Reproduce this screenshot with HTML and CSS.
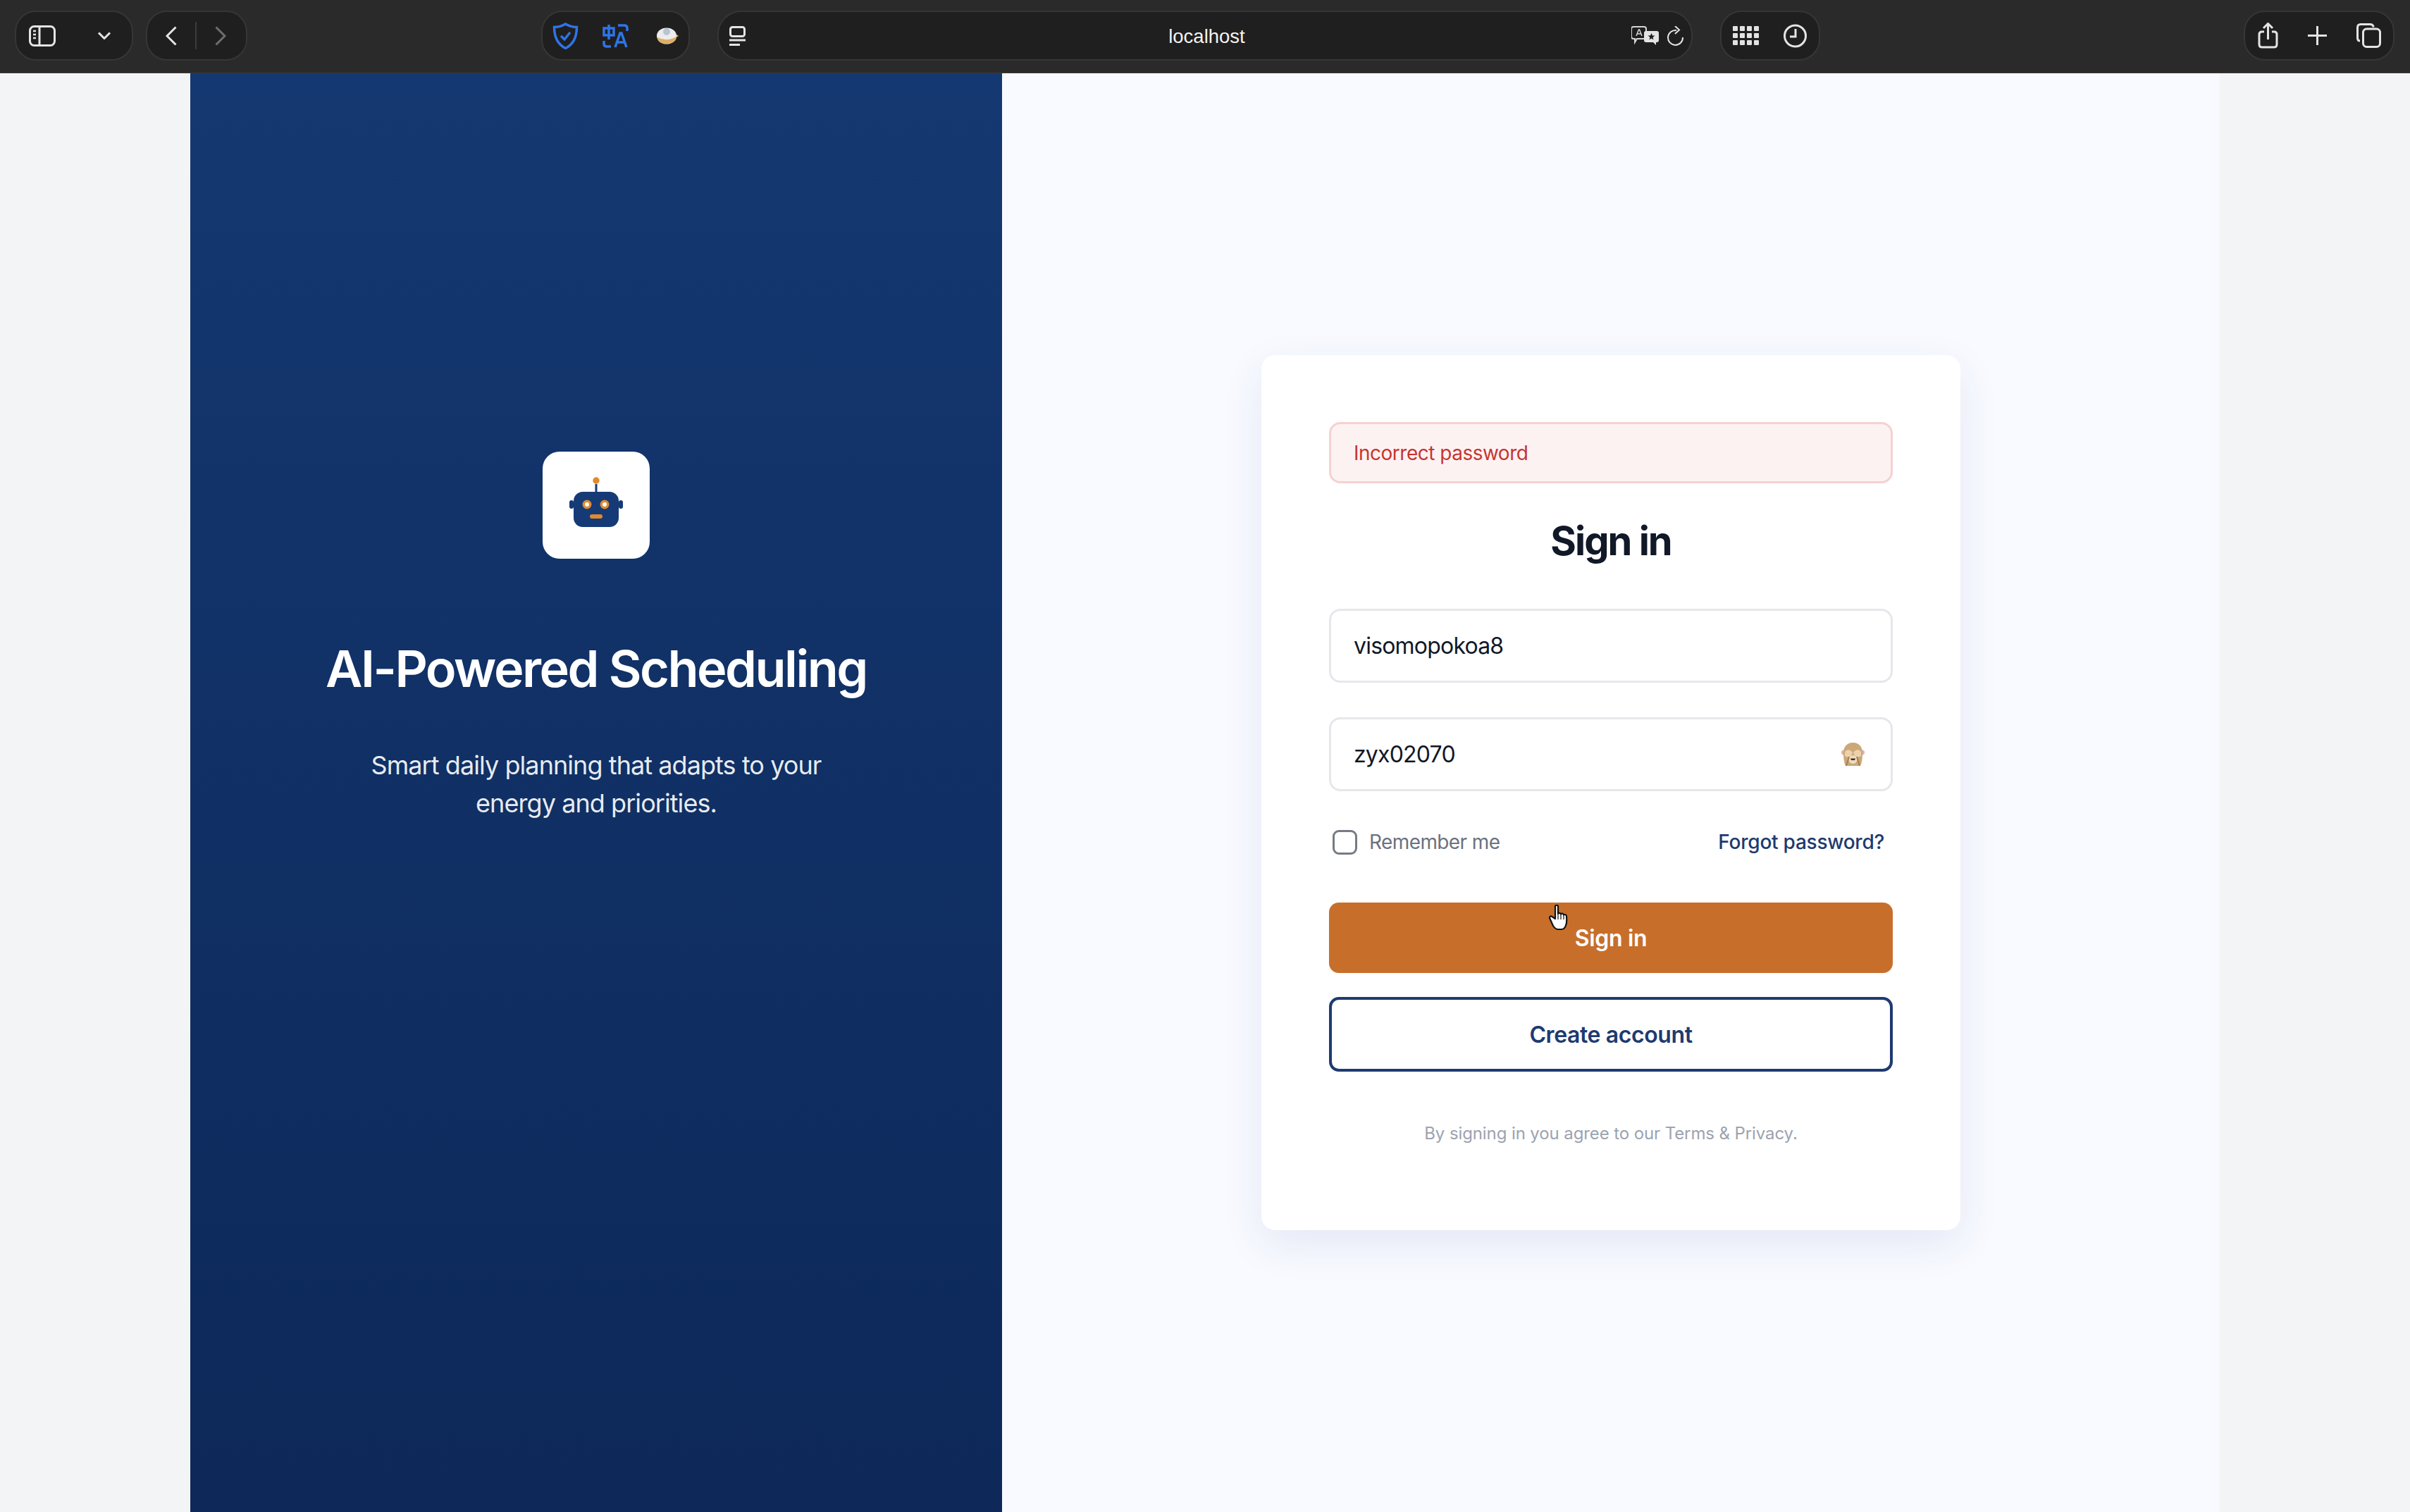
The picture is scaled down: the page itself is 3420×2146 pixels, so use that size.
FILE: index.html
```html
<!DOCTYPE html>
<html lang="en">
<head>
<meta charset="utf-8">
<title>Sign in</title>
<link rel="stylesheet" href="styles.css">
</head>
<body>
<header class="toolbar">
  <div class="pill pill-sidebar">
    <svg class="ic" width="38" height="30" viewBox="0 0 38 30"><rect x="1.5" y="1.5" width="35" height="27" rx="6"/><path d="M15 2v26"/><path class="thin" d="M6 8h4M6 13h4M6 18h4"/></svg>
    <svg class="ic" width="20" height="11" viewBox="0 0 20 11"><path d="M2 1.5l8 8 8-8"/></svg>
  </div>
  <div class="pill pill-nav">
    <svg class="ic" width="16" height="28" viewBox="0 0 16 28"><path d="M14.5 1.5L2 14l12.5 12.500"/></svg>
    <span class="nav-divider"></span>
    <svg class="ic dim" width="16" height="28" viewBox="0 0 16 28"><path d="M1.500 1.500L14 14 1.500 26.500"/></svg>
  </div>
  <div class="pill pill-ext">
    <svg class="ic blue" width="37" height="38" viewBox="0 0 37 38"><path d="M18.500 2c5 3 10 4.500 16 4.500 0 13-4 24-16 30-12-6-16-17-16-30 6 0 11-1.500 16-4.500z"/><path d="M12 19l5 5 8-10"/></svg>
    <svg class="ic blue" width="37" height="34" viewBox="0 0 37 34"><path d="M2 6h14v10H2zM9 1v21"/><path d="M22 2h9q4 0 4 4v4M2 24v4q0 4 4 4h6"/><path d="M18 33l7-20h2l7 20M21 26h10"/></svg>
    <svg width="33" height="24" viewBox="0 0 33 24"><ellipse cx="16" cy="12" rx="14" ry="11.500" fill="#ececec"/><path d="M3 14q13 7 27-1 0 9-14 10Q3 23 3 14z" fill="#dcae66"/><circle cx="16" cy="6" r="5" fill="#b8c4d6"/><path d="M30 10l3 2-3 2z" fill="#dcae66"/></svg>
  </div>
  <div class="pill pill-url">
    <svg class="ic" width="23" height="28" viewBox="0 0 23 28"><rect x="1.500" y="1.500" width="20" height="13" rx="3"/><path d="M0 20h23M0 26.500h15"/></svg>
    <span class="url-text">localhost</span>
    <span class="url-tools">
      <svg width="39" height="27" viewBox="0 0 39 27"><path d="M3 1h15q3 0 3 3v11q0 3-3 3H8l-3 5v-5H3q-3 0-3-3V4q0-3 3-3z" fill="#1e1e1e" stroke="#d6d6d6" stroke-width="2"/><path d="M7 14l3.500-9h1L15 14M8.500 11h5" fill="none" stroke="#d6d6d6" stroke-width="1.500"/><path d="M21 7h15q3 0 3 3v10q0 3-3 3h-1v4l-4-4H21q-3 0-3-3V10q0-3 3-3z" fill="#e4e4e4"/><path d="M28.500 10l1.500 3.500h3.500l-3 2.500 1 3.500-3-2-3 2 1-3.500-3-2.500H27z" fill="#1e1e1e"/></svg>
      <svg class="ic thin-ic" width="25" height="28" viewBox="0 0 25 28"><path d="M14 6A10.500 10.500 0 1 0 23 16"/><path d="M12 0l6 5.500-6 5.500"/></svg>
    </span>
  </div>
  <div class="pill pill-apps">
    <span class="apps-grid"><i></i><i></i><i></i><i></i><i></i><i></i><i></i><i></i><i></i><i></i><i></i><i></i></span>
    <svg class="ic" width="33" height="34" viewBox="0 0 33 34"><circle cx="16.500" cy="17" r="15"/><path d="M17 7v11H9"/></svg>
  </div>
  <div class="pill pill-right">
    <svg class="ic" width="29" height="37" viewBox="0 0 29 37"><path d="M9 13H6q-4 0-4 4v14q0 4 4 4h17q4 0 4-4V17q0-4-4-4h-3"/><path d="M14.500 24V2M8 8l6.500-6.500L21 8"/></svg>
    <svg class="ic" width="27" height="27" viewBox="0 0 27 27"><path d="M13.500 0v27M0 13.500h27"/></svg>
    <svg class="ic" width="35" height="35" viewBox="0 0 35 35"><path d="M5 25q-3.500 0-3.500-4V6q0-4.500 4.500-4.500h13q5 0 5 4"/><rect x="9.500" y="8" width="24" height="25.500" rx="5"/></svg>
  </div>
</header>

<main class="page">
  <section class="hero">
    <div class="logo">
      <svg width="152" height="152" viewBox="0 0 152 152">
        <rect class="bot" x="44" y="57" width="64" height="50" rx="13"/>
        <rect class="bot" x="74.500" y="46" width="3" height="12"/>
        <circle class="accent" cx="76" cy="41" r="4.700"/>
        <rect class="bot" x="38" y="69" width="6" height="12" rx="3"/>
        <rect class="bot" x="108" y="69" width="6" height="12" rx="3"/>
        <circle class="accent" cx="63" cy="75" r="6.500"/><circle fill="#fff" cx="63" cy="75" r="3"/>
        <circle class="accent" cx="88" cy="75" r="6.500"/><circle fill="#fff" cx="88" cy="75" r="3"/>
        <rect class="accent" x="67" y="89" width="18" height="6" rx="3"/>
      </svg>
    </div>
    <h2 class="hero-title">AI-Powered Scheduling</h2>
    <p class="hero-text">Smart daily planning that adapts to your energy and priorities.</p>
  </section>

  <section class="auth">
    <form class="card">
      <div class="alert">Incorrect password</div>
      <h1 class="card-title">Sign in</h1>
      <div class="field">visomopokoa8</div>
      <div class="field field-pass">
        <span>zyx02070</span>
        <svg width="33" height="33" viewBox="0 0 33 33">
          <circle cx="3.500" cy="14" r="3.500" fill="#dcb4aa"/><circle cx="29.500" cy="14" r="3.500" fill="#dcb4aa"/>
          <path d="M16.500 0C26 0 30 7 30 15c0 8-1 14-3 18H6C4 29 3 23 3 15 3 7 7 0 16.500 0z" fill="#cba878"/>
          <path d="M5 13q5-6 11 1-1 4-4 6-4 1-7-1zM28 13q-5-6-11 1 1 4 4 6 4 1 7-1z" fill="#ecd2ac"/>
          <ellipse cx="16.500" cy="24" rx="6" ry="6" fill="#ecdcc0"/>
          <path d="M13 22.500h7l-1 2.500h-5z" fill="#4a2f1c"/>
          <path d="M7 33l4-13M26 33l-4-13" stroke="#a87f4e" stroke-width="2"/>
        </svg>
      </div>
      <div class="options">
        <label class="remember"><span class="check"></span>Remember me</label>
        <a class="forgot">Forgot password?</a>
      </div>
      <button class="btn btn-primary" type="button">Sign in</button>
      <button class="btn btn-outline" type="button">Create account</button>
      <p class="legal">By signing in you agree to our Terms &amp; Privacy.</p>
    </form>
    <svg class="cursor" width="29" height="37" viewBox="0 0 29 37">
      <path d="M9 2.500c0-2.500 4-2.500 4 0V13c1-1.500 3.500-1.500 4 .5 1-1.500 3.500-1 4 1 1.500-1 4-.5 4 2 .5 6 .5 10-1 13-1 3-3 5.500-6 5.500h-5c-3 0-5-2-7-5L1.500 20c-1.500-2 .5-4.500 3-3L9 20z" fill="#fff" stroke="#111" stroke-width="2.200" stroke-linejoin="round"/>
      <path d="M13 14v7M17 14v7M21 15v6" stroke="#111" stroke-width="1.200" fill="none"/>
    </svg>
  </section>
</main>
</body>
</html>
```

FILE: styles.css
```css
* { box-sizing: border-box; }
html, body { margin: 0; height: 100%; }
body {
  width: 3420px;
  height: 2146px;
  overflow: hidden;
  display: flex;
  flex-direction: column;
  background: #f3f4f6;
  font-family: Inter, "Liberation Sans", sans-serif;
}

/* browser chrome */
.toolbar {
  height: 104px;
  flex: none;
  display: flex;
  align-items: center;
  padding: 0 22px 2px 21px;
  background: #2a2a2a;
  border-bottom: 1px solid #3a3a3a;
}
.pill {
  height: 71px;
  flex: none;
  display: flex;
  align-items: center;
  background: #1f1f1f;
  border: 2px solid #363636;
  border-radius: 30px;
}
.pill-sidebar { width: 168px; padding-left: 18px; gap: 59px; }
.pill-nav { width: 144px; margin-left: 18px; padding-left: 26px; }
.nav-divider { width: 2px; height: 39px; background: #3c3c3c; margin: 0 26px 0 26px; }
.pill-ext { width: 211px; margin-left: 417px; padding-left: 14px; gap: 34px; }
.pill-ext svg:last-child { margin-left: 4px; }
.pill-url {
  width: 1384px;
  margin-left: 39px;
  padding: 0 10px 0 15px;
  display: grid;
  grid-template-columns: 1fr auto 1fr;
  border-radius: 34px;
}
.pill-url .ic { justify-self: start; }
.url-text { color: #f2f2f2; font: 27.5px/1 "Liberation Sans", sans-serif; padding-top: 3px; }
.url-tools { justify-self: end; display: flex; align-items: center; gap: 11px; }
.pill-apps { width: 142px; margin-left: 39px; padding-left: 16px; gap: 35px; }
.apps-grid { width: 37px; display: grid; grid-template-columns: repeat(4, 7px); gap: 3px; }
.apps-grid i { height: 7px; background: #e2e2e2; border-radius: 1px; }
.pill-right { width: 214px; margin-left: auto; padding-left: 18px; gap: 42px; }
.ic { fill: none; stroke: #e4e4e4; stroke-width: 3; flex: none; }
.ic .thin { stroke-width: 2.500; }
.ic.dim { stroke: #6e6e6e; }
.ic.blue { stroke: #2f74e8; stroke-width: 3.500; }
.ic.thin-ic { stroke-width: 2; }

/* page */
.page {
  flex: 1;
  min-height: 0;
  display: flex;
  margin: 0 270px;
  background: #f8faff;
}
.hero {
  width: 1152px;
  flex: none;
  display: flex;
  flex-direction: column;
  align-items: center;
  padding-top: 537px;
  background: linear-gradient(180deg, #143871 0%, #0d2859 100%);
  color: #fff;
  text-align: center;
}
.logo {
  width: 152px;
  height: 152px;
  background: #fff;
  border-radius: 24px;
}
.logo svg { display: block; }
.bot { fill: #153a75; }
.accent { fill: #e08a2c; }
.hero-title {
  margin: 112px 0 0;
  font-size: 72px;
  line-height: 88px;
  font-weight: 600;
  letter-spacing: -2.500px;
}
.hero-text {
  width: 700px;
  margin: 66px 0 0;
  font-size: 36px;
  line-height: 54px;
  letter-spacing: -0.930px;
  color: rgba(255, 255, 255, 0.92);
}

/* auth */
.auth {
  flex: 1;
  position: relative;
  display: flex;
  align-items: center;
  justify-content: center;
}
.card {
  width: 992px;
  height: 1242px;
  padding: 95px 96px;
  background: #fff;
  border-radius: 20px;
  box-shadow: 0 20px 60px rgba(30, 60, 140, 0.09);
  display: flex;
  flex-direction: column;
}
.alert {
  height: 87px;
  display: flex;
  align-items: center;
  padding: 0 32px;
  background: #fdf2f2;
  border: 3px solid #f6d0d0;
  border-radius: 16px;
  color: #c8352f;
  font-size: 28px;
  letter-spacing: -0.5px;
}
.card-title {
  margin: 46px 0 0;
  height: 72px;
  font-size: 56px;
  line-height: 72px;
  font-weight: 700;
  letter-spacing: -2px;
  text-align: center;
  color: #111827;
}
.field {
  height: 105px;
  margin-top: 60px;
  padding: 0 32px;
  display: flex;
  align-items: center;
  justify-content: space-between;
  border: 3px solid #e5e7eb;
  border-radius: 16px;
  color: #111827;
  font-size: 32px;
  letter-spacing: -0.8px;
  line-height: 40px;
}
.field-pass { margin-top: 49px; padding-right: 37px; }
.options {
  height: 36px;
  margin-top: 54px;
  padding: 0 12px 0 5px;
  display: flex;
  align-items: center;
  justify-content: space-between;
  font-size: 28px;
}
.remember { display: flex; align-items: center; gap: 17px; color: #6b7280; letter-spacing: -0.6px; }
.check {
  width: 35px;
  height: 35px;
  border: 3px solid #767b84;
  border-radius: 9px;
}
.forgot { color: #1e3a70; font-weight: 500; letter-spacing: -0.25px; }
.btn {
  display: block;
  width: 100%;
  font: 600 32px Inter, "Liberation Sans", sans-serif;
  border-radius: 14px;
}
.btn-primary {
  height: 100px;
  margin-top: 68px;
  background: #c76f2a;
  color: #fff;
  border: 0;
  letter-spacing: -0.3px;
}
.btn-outline {
  height: 106px;
  margin-top: 34px;
  background: #fff;
  color: #1e3a70;
  border: 4px solid #1e3a70;
  letter-spacing: -0.4px;
}
.legal {
  margin: 72px 0 0;
  font-size: 24px;
  line-height: 32px;
  letter-spacing: -0.1px;
  text-align: center;
  color: #9ca3af;
}
.cursor { position: absolute; left: 776px; top: 1180px; }
```
